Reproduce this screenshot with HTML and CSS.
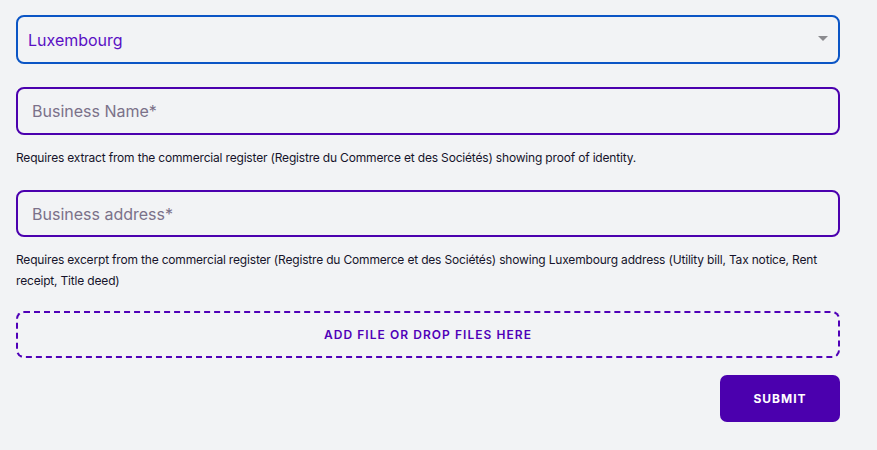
FILE: index.html
```html
<!DOCTYPE html>
<html lang="en">
<head>
    <meta charset="UTF-8">
    <title>Business details</title>
    <link rel="stylesheet" href="styles.css">
</head>
<body>
<form class="form">
    <div class="select">
        <span class="select-value">Luxembourg</span>
        <span class="select-arrow"></span>
    </div>

    <input class="field field-first" type="text" placeholder="Business Name*">
    <p class="hint">Requires extract from the commercial register (Registre du Commerce et des Sociétés) showing proof of identity.</p>

    <input class="field" type="text" placeholder="Business address*">
    <p class="hint">Requires excerpt from the commercial register (Registre du Commerce et des Sociétés) showing Luxembourg address (Utility bill, Tax notice, Rent receipt, Title deed)</p>

    <div class="dropzone">Add file or drop files here</div>

    <div class="actions">
        <button class="submit" type="button">Submit</button>
    </div>
</form>
</body>
</html>
```

FILE: styles.css
```css
* {
    margin: 0;
    padding: 0;
    box-sizing: border-box;
}

body {
    background: #f2f3f5;
    font-family: "Inter", "Liberation Sans", sans-serif;
    color: #16132b;
}

.form {
    width: 824px;
    margin-left: 16px;
    padding-top: 15px;
}

.select {
    height: 49px;
    border: 2px solid #0b55c5;
    border-radius: 8px;
    display: flex;
    align-items: center;
    justify-content: space-between;
    padding: 0 10px 0 10px;
}

.select-value {
    font-size: 16px;
    color: #5a10c4;
}

.select-arrow {
    width: 0;
    height: 0;
    border-left: 5px solid transparent;
    border-right: 5px solid transparent;
    border-top: 5px solid #8b8b8f;
    margin-top: -2px;
}

.field {
    display: block;
    width: 100%;
    height: 47px;
    margin-top: 22px;
    border: 2px solid #4b00ae;
    border-radius: 8px;
    background: transparent;
    padding: 0 14px;
    font-family: inherit;
    font-size: 16px;
    color: #16132b;
    outline: none;
}

.field-first {
    margin-top: 23px;
    height: 48px;
}

.field::placeholder {
    color: #7b7189;
}

.hint {
    font-size: 12px;
    line-height: 21px;
    letter-spacing: -0.18px;
    margin-top: 12px;
}

.dropzone {
    height: 47px;
    margin-top: 20px;
    border: 2px dashed #5000b8;
    border-radius: 8px;
    display: flex;
    align-items: center;
    justify-content: center;
    text-transform: uppercase;
    font-size: 12px;
    font-weight: 600;
    letter-spacing: 1.05px;
    color: #5000b8;
}

.actions {
    display: flex;
    justify-content: flex-end;
    margin-top: 17px;
}

.submit {
    width: 120px;
    height: 47px;
    border: none;
    border-radius: 7px;
    background: #4b00ae;
    color: #fff;
    font-family: inherit;
    font-size: 12px;
    font-weight: 700;
    letter-spacing: 1px;
    text-transform: uppercase;
}
```
